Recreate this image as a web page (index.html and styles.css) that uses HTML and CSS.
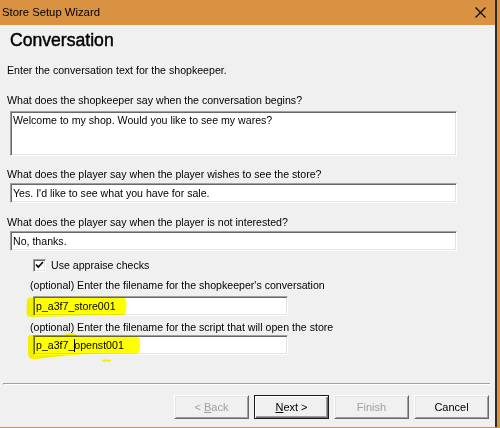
FILE: index.html
```html
<!DOCTYPE html>
<html>
<head>
<meta charset="utf-8">
<title>Store Setup Wizard</title>
<link rel="stylesheet" href="styles.css">
</head>
<body>
<div class="window">
  <div class="titlebar">
    <span class="title">Store Setup Wizard</span>
    <svg class="close" width="11" height="11" viewBox="0 0 11 11"><path d="M0.5 0.5 L10.5 10.5 M10.5 0.5 L0.5 10.5" stroke="#000" stroke-width="1.1" fill="none"/></svg>
  </div>
  <div class="content">
    <div class="heading">Conversation</div>
    <div class="intro">Enter the conversation text for the shopkeeper.</div>
    <div class="label l1">What does the shopkeeper say when the conversation begins?</div>
    <div class="field area">Welcome to my shop. Would you like to see my wares?</div>
    <div class="label l2">What does the player say when the player wishes to see the store?</div>
    <div class="field line f2">Yes. I'd like to see what you have for sale.</div>
    <div class="label l3">What does the player say when the player is not interested?</div>
    <div class="field line f3">No, thanks.</div>
    <div class="check-row">
      <span class="checkbox"><svg width="9" height="9" viewBox="0 0 9 9"><path d="M1 3.5 L3.3 6 L8 1" stroke="#000" stroke-width="1.6" fill="none"/></svg></span>
      <span class="check-label">Use appraise checks</span>
    </div>
    <div class="label sub o1">(optional) Enter the filename for the shopkeeper's conversation</div>
    <div class="field line short f4">p_a3f7_store001</div>
    <div class="label sub o2">(optional) Enter the filename for the script that will open the store</div>
    <div class="field line short f5">p_a3f7_<span class="caret"></span>openst001</div>
  </div>
  <div class="separator"></div>
  <div class="buttons">
    <div class="btn disabled"><span>&lt; <u>B</u>ack</span></div>
    <div class="btn default"><span><u>N</u>ext &gt;</span></div>
    <div class="btn disabled"><span>Finish</span></div>
    <div class="btn"><span>Cancel</span></div>
  </div>
  <svg class="marks" width="495" height="427" viewBox="0 0 495 427">
    <path d="M27 301 Q27 297.5 31 297.5 L123 297.5 Q126.5 298 126.5 303 L126 313 Q125.5 315 121 315 L31 317 Q26.5 317 26.5 313 Z" fill="#ffff00"/>
    <path d="M28 338 Q28 335 31 335 L64 335 Q68 332.5 72 333 Q76 333.5 78 336.5 L136 336.5 Q140 337 140 341 L140 350 Q139.5 353.5 135 353.5 Q110 353 80 354.5 Q60 356 45 358 Q34 360 30 358.5 Q28 357 28 353 Z" fill="#ffff00"/>
    <rect x="102" y="359.5" width="9" height="2" rx="1" fill="#ffff00"/>
  </svg>
</div>
</body>
</html>
```

FILE: styles.css
```css
html, body {
  margin: 0;
  padding: 0;
}
body {
  background: #d99142;
  width: 500px;
  height: 428px;
  overflow: hidden;
  font-family: "Liberation Sans", Arial, sans-serif;
  font-size: 10.6px;
  color: #000;
}
.window {
  position: relative;
  width: 495px;
  height: 427px;
  background: #f0f0f0;
  border-right: 2px solid #2e2a26;
  display: flex;
  flex-direction: column;
}
.titlebar {
  height: 25px;
  background: #d99142;
  display: flex;
  align-items: center;
  justify-content: space-between;
  padding: 0 9px 0 2px;
  flex: none;
}
.title {
  font-size: 11.3px;
  line-height: 25px;
  color: #000;
}
.close {
  display: block;
  margin-top: -1px;
}
.content {
  padding: 0 0 0 7px;
  display: flex;
  flex-direction: column;
  align-items: flex-start;
}
.heading {
  margin-top: 5px;
  margin-left: 3px;
  font-size: 17.6px;
  line-height: 20px;
  -webkit-text-stroke: 0.45px #000;
}
.intro, .label, .check-label {
  line-height: 13px;
  white-space: nowrap;
}
.intro { margin-top: 14px; }
.l1 { margin-top: 17px; }
.l2 { margin-top: 12px; }
.l3 { margin-top: 13px; }
.field {
  box-sizing: border-box;
  margin-left: 3px;
  width: 447px;
  background: #fff;
  border-top: 1px solid #a0a0a0;
  border-left: 1px solid #a0a0a0;
  border-bottom: 1px solid #fff;
  border-right: 1px solid #fff;
  box-shadow: inset 1px 1px 0 #696969, inset -1px -1px 0 #e3e3e3;
  padding: 0 3px 0 2px;
  white-space: nowrap;
}
.area {
  margin-top: 4px;
  height: 45px;
  padding-top: 2px;
  line-height: 13px;
}
.line {
  height: 20px;
  line-height: 18px;
}
.f2, .f3 { margin-top: 2px; }
.short {
  margin-left: 26px;
  width: 255px;
}
.check-row {
  margin-top: 8px;
  margin-left: 26px;
  display: flex;
  align-items: center;
  height: 13px;
  gap: 5px;
}
.checkbox {
  box-sizing: border-box;
  width: 13px;
  height: 13px;
  background: #fff;
  border-top: 1px solid #a0a0a0;
  border-left: 1px solid #a0a0a0;
  border-bottom: 1px solid #fff;
  border-right: 1px solid #fff;
  box-shadow: inset 1px 1px 0 #696969, inset -1px -1px 0 #e3e3e3;
  display: flex;
  align-items: center;
  justify-content: center;
}
.checkbox svg { display: block; }
.sub { margin-left: 23px; }
.o1 { margin-top: 7px; }
.f4 { margin-top: 4px; }
.o2 { margin-top: 5px; }
.f5 { margin-top: 1px; }
.caret {
  display: inline-block;
  width: 1px;
  height: 13px;
  background: #000;
  vertical-align: -3px;
  margin-right: -1px;
}
.separator {
  margin-top: 28px;
  margin-left: 3px;
  width: 487px;
  height: 2px;
  box-sizing: border-box;
  border-top: 1px solid #a0a0a0;
  border-left: 1px solid #a0a0a0;
  border-bottom: 1px solid #fff;
  flex: none;
}
.buttons {
  margin-top: 10px;
  display: flex;
  justify-content: flex-end;
  gap: 5px;
  padding-right: 6px;
}
.btn {
  box-sizing: border-box;
  width: 75px;
  height: 24px;
  background: #f0f0f0;
  border-top: 1px solid #fff;
  border-left: 1px solid #fff;
  border-right: 1px solid #696969;
  border-bottom: 1px solid #696969;
  box-shadow: inset 1px 1px 0 #e3e3e3, inset -1px -1px 0 #a0a0a0;
  display: flex;
  align-items: center;
  justify-content: center;
  line-height: 13px;
  font-size: 11px;
}
.btn.disabled { color: #a0a0a0; }
.btn.default {
  border: 1px solid #1a1a1a;
  box-shadow: inset 1px 1px 0 #fff, inset -1px -1px 0 #696969, inset -2px -2px 0 #a0a0a0;
}
.marks {
  position: absolute;
  left: 0;
  top: 0;
  pointer-events: none;
  mix-blend-mode: multiply;
}
```
